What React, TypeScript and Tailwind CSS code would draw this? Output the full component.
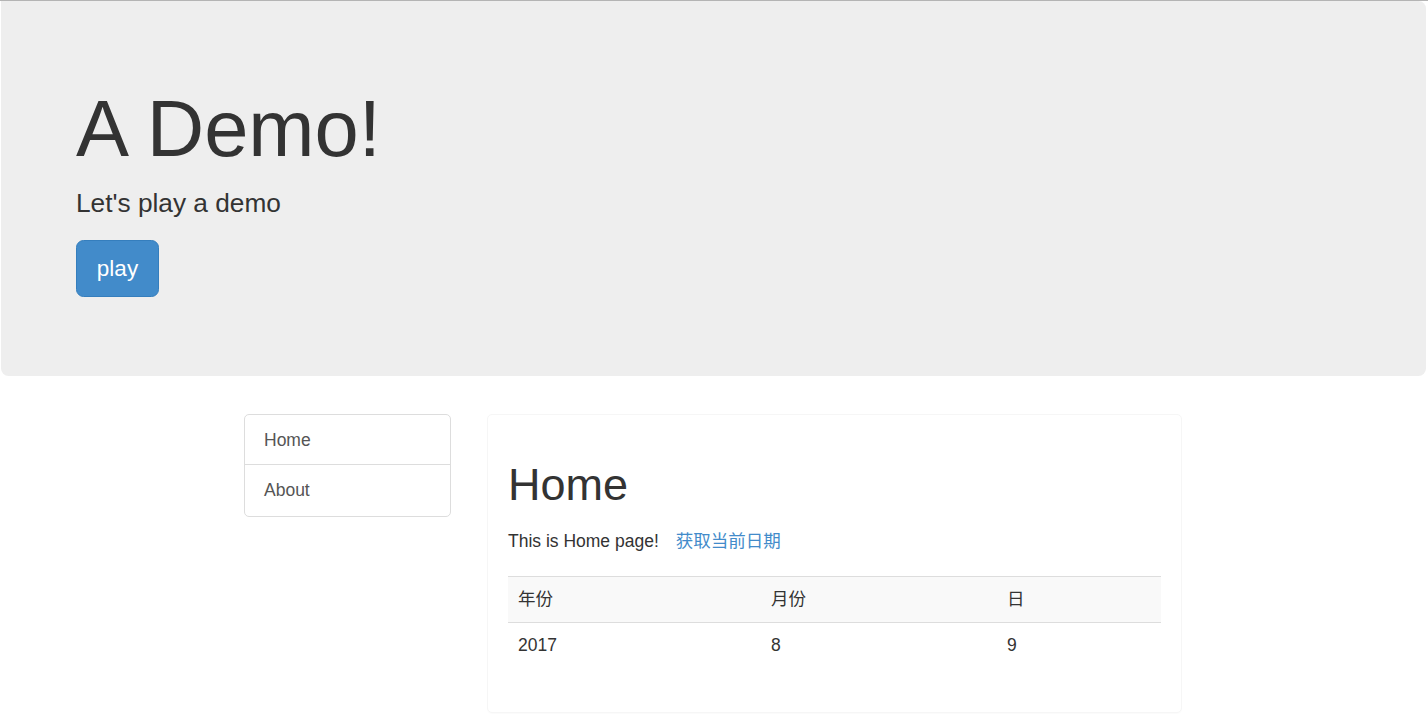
import React from 'react';

const font = { fontFamily: '"Liberation Sans", "Noto Sans CJK SC", Arial, sans-serif' };

const App: React.FC = () => {
  const rows = [
    { y: '年份', m: '月份', d: '日', head: true },
    { y: '2017', m: '8', d: '9', head: false },
  ];

  return (
    <div className="min-h-[717px] bg-white text-[#333] text-[17.5px]" style={font}>
      <div className="h-px bg-[#b4b4b4]" />

      {/* Jumbotron */}
      <div className="ml-px mr-[2px] rounded-b-[7.5px] rounded-tr-[7.5px] bg-[#eeeeee] px-[75px] pt-[60px] pb-[79px]">
        <h1 className="mt-[25px] mb-[12.5px] text-[79.5px] leading-[1.09] font-normal">A Demo!</h1>
        <p className="mb-[17.5px] text-[26.25px] leading-[37.5px] font-light">Let's play a demo</p>
        <button className="flex h-[57px] w-[83px] items-center justify-center rounded-[7.5px] border border-[#357ebd] bg-[#428bca] text-[22.5px] text-white">
          play
        </button>
      </div>

      {/* Content */}
      <div className="mt-[38px] flex items-start">
        <div className="ml-[244px] w-[207px] rounded-[5px] border border-[#dddddd] text-[#555]">
          <div className="h-[50px] border-b border-[#dddddd] px-[19px] leading-[50px]">Home</div>
          <div className="h-[51px] px-[19px] leading-[51px]">About</div>
        </div>

        <div className="ml-[36px] w-[695px] rounded-[5px] border border-[#f6f6f6] px-[20px] pt-[20px] pb-[19px] shadow-[0_1px_1px_rgba(0,0,0,0.02)]">
          <h1 className="mt-[25px] mb-[12.5px] text-[45px] leading-[49.5px] font-normal">Home</h1>
          <div className="flex h-[42px] items-start pt-[7px] leading-[25px]">
            <span>This is Home page!</span>
            <span className="ml-[17px] text-[#428bca]">获取当前日期</span>
          </div>
          <table className="mt-[12px] mb-[25px] w-full border-collapse">
            <tbody>
              {rows.map((r) => (
                <tr key={r.y} className={r.head ? 'bg-[#f9f9f9]' : ''}>
                  <td className="w-[253px] border-t border-[#dddddd] p-[10px] leading-[25px]">{r.y}</td>
                  <td className="w-[236px] border-t border-[#dddddd] p-[10px] leading-[25px]">{r.m}</td>
                  <td className="border-t border-[#dddddd] p-[10px] leading-[25px]">{r.d}</td>
                </tr>
              ))}
            </tbody>
          </table>
        </div>
      </div>
    </div>
  );
};

export default App;
